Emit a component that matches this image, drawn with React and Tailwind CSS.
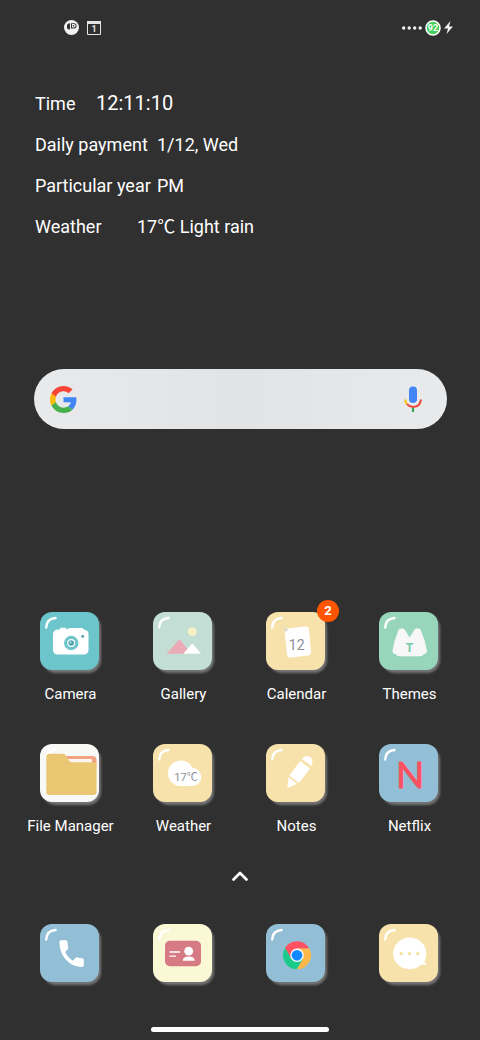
import { useState } from 'react';

// Every glyph is drawn on the same 59x58 tile
function CameraArt() {
  return (
    <>
      <rect x="20" y="15.7" width="6.3" height="4" rx="1" fill="#fff" />
      <path d="M18 17.6h8.500l3-1.700h12.500l3 2a4 4 0 0 1 3.500 4V38a4.500 4.500 0 0 1-4.500 4.500H17.500A4.500 4.500 0 0 1 13 38V22a4.500 4.500 0 0 1 5-4.400z" fill="#fff" />
      <circle cx="31.2" cy="31" r="7.200" fill="#6cc5ca" />
      <circle cx="31.2" cy="31" r="4" fill="#fff" />
      <circle cx="31.2" cy="31" r="2.800" fill="#4fa3aa" />
      <circle cx="30.5" cy="30.4" r="0.9" fill="#cdeef0" />
      <circle cx="42.7" cy="24.4" r="1.400" fill="#4b9da3" />
    </>
  );
}

function GalleryArt() {
  return (
    <>
      <circle cx="39.3" cy="19.7" r="4.4" fill="#f8f1c4" />
      <path d="M13.5 41.7L25.5 28.2q1-1 2 0L38 41.7z" fill="#eaabb6" />
      <path d="M30.3 41.7l8.5-9.6q.6-.6 1.2 0l8 9.6z" fill="#fff" />
    </>
  );
}

function CalendarArt() {
  return (
    <>
      <path d="M22 16.5l17-2a3.500 3.500 0 0 1 4 3l2 22a3.500 3.500 0 0 1-3 4l-17 2a3.500 3.500 0 0 1-4-3l-2.300-22z" fill="#fff" />
      <path d="M17 14.6l2 1.8 2.800.4-.6 2.600-2.400-.8z" fill="#d5d8dc" />
      <text x="30.7" y="38" textAnchor="middle" fontSize="14" fill="#8b8f98">12</text>
    </>
  );
}

function ThemesArt() {
  return (
    <>
      <path d="M19.3 18.5q.7-2 2.200-2h2.300q1.200 0 1.800 1l5 8 5-8q.6-1 1.800-1h2.300q1.500 0 2.200 2 4.600 10.500 6 20 .5 3-3 3.600-1 2.200-4 2.200H20.500q-3 0-4-2.200-3.500-.6-3-3.600 1.400-9.500 5.800-20z" fill="#f6f7f6" />
      <text x="30.500" y="39.700" textAnchor="middle" fontSize="12" fontWeight="700" fill="#76c8a8">T</text>
    </>
  );
}

function FilesArt() {
  return (
    <>
      <path d="M24 12h28.500a4 4 0 0 1 4 4v7H24z" fill="#f0a582" />
      <rect x="26" y="15" width="26" height="6" rx="1.5" fill="#fdf5f0" />
      <path d="M9 9.700h14q2 0 2.800 1.500l3 5q1 2 3.500 2H53.500a3 3 0 0 1 3 3V48a3 3 0 0 1-3 3H9.300a3 3 0 0 1-3-3V12.700a3 3 0 0 1 2.700-3z" fill="#eac873" />
    </>
  );
}

function WeatherArt() {
  return (
    <>
      <path d="M28 16.500c5.500 0 9.500 3 11.500 7.500 5 0 8.700 3.800 8.700 9 0 5-3.700 9-9 9H27.500C20.500 42 15 36.500 15 29.300 15 22 20.800 16.500 28 16.500z" fill="#fff" />
      <text x="33" y="37" textAnchor="middle" fontSize="11" fill="#8b8f98">17℃</text>
    </>
  );
}

function NotesArt() {
  return (
    <g fill="#fff">
      <path d="M36 15.200C39 11 42.500 11.500 44.500 13.200S47 18.500 45.500 22z" />
      <path d="M34.300 17l9.700 7.400L33 38.900l-9.700-7.400z" />
      <path d="M22.500 33.200l8.600 6.600-9 4.200q-.8.200-.7-.7z" />
    </g>
  );
}

function NetflixArt() {
  return <text x="31" y="44" textAnchor="middle" fontSize="37" fontFamily="Lato, sans-serif" fill="#fb5161" stroke="#fb5161">N</text>;
}

function PhoneArt() {
  return (
    <path
      transform="translate(16 12.5) scale(1.3 1.43)"
      d="M6.620 10.790c1.440 2.830 3.760 5.140 6.590 6.590l2.200-2.200c.27-.27.67-.36 1.020-.24 1.120.37 2.330.57 3.570.57.55 0 1 .45 1 1V20c0 .55-.45 1-1 1-9.390 0-17-7.610-17-17 0-.55.45-1 1-1h3.500c.55 0 1 .45 1 1 0 1.250.2 2.450.57 3.570.11.35.03.74-.25 1.020l-2.200 2.200z"
      fill="#fff"
      stroke="#fff"
      strokeWidth="0.7"
    />
  );
}

function ContactsArt() {
  return (
    <>
      <rect x="12" y="16.7" width="36" height="25.6" rx="5" fill="#d67a84" />
      <path d="M17 28h9.700M17 32.200h5.500" stroke="#fff" strokeWidth="1.300" strokeLinecap="round" />
      <circle cx="35.7" cy="27.2" r="4.400" fill="#fff" />
      <path d="M29.700 36.800c.3-3 2.300-4.300 6-4.300s5.700 1.300 6 4.300z" fill="#fff" />
    </>
  );
}

function ChromeArt() {
  return (
    <g transform="translate(31 31.3)">
      <path d="M-11.950-7.300A14 14 0 0 1 12.300-6.700H0L-5.800 3.350z" fill="#ff5160" />
      <path d="M12.300-6.700A14 14 0 0 1-.35 14L5.800 3.350 0-6.700z" fill="#ffb849" />
      <path d="M-.35 14A14 14 0 0 1-11.950-7.300L-5.800 3.350H5.800z" fill="#1bcb8a" />
      <circle r="6.700" fill="#fff" />
      <circle r="5.400" fill="#1189ff" />
    </g>
  );
}

function MessagesArt() {
  return (
    <>
      <ellipse cx="30.7" cy="29.4" rx="16.6" ry="15.8" fill="#fff" />
      <path d="M45 35q.2 3.500 2.600 5.600-4 .8-7.600-1z" fill="#fff" />
      <g fill="#f8dfa0">
        <circle cx="22.3" cy="29.6" r="1.7" />
        <circle cx="30.5" cy="29.6" r="1.7" />
        <circle cx="38.7" cy="29.6" r="1.7" />
      </g>
    </>
  );
}

const APPS = [
  { name: 'Camera', color: '#6cc5ca', Art: CameraArt },
  { name: 'Gallery', color: '#c3dfd5', Art: GalleryArt },
  { name: 'Calendar', color: '#f8e2ab', Art: CalendarArt, badge: 2 },
  { name: 'Themes', color: '#98d6bb', Art: ThemesArt },
  { name: 'File Manager', color: '#f8f8f7', Art: FilesArt },
  { name: 'Weather', color: '#f8e2ab', Art: WeatherArt },
  { name: 'Notes', color: '#f8e2ab', Art: NotesArt },
  { name: 'Netflix', color: '#93bfd6', Art: NetflixArt },
];

const DOCK = [
  { name: 'Phone', color: '#93bfd6', Art: PhoneArt },
  { name: 'Contacts', color: '#fbf8d6', Art: ContactsArt },
  { name: 'Chrome', color: '#93bfd6', Art: ChromeArt },
  { name: 'Messages', color: '#f8e2ab', Art: MessagesArt },
];

const INFO = [
  { label: 'Time', value: '12:11:10', labelClass: 'w-[61px]', valueClass: 'text-[20px]' },
  { label: 'Daily payment', value: '1/12, Wed', labelClass: 'w-[122px]', valueClass: 'text-[18px]' },
  { label: 'Particular year', value: 'PM', labelClass: 'w-[122px]', valueClass: 'text-[18px]' },
  { label: 'Weather', value: '17℃ Light rain', labelClass: 'w-[102px]', valueClass: 'text-[18px]' },
];

function Tile({ color, Art, badge }) {
  return (
    <span className="relative block">
      <svg className="block h-[61px] w-[61px] overflow-visible" viewBox="0 0 61 61" aria-hidden="true">
        <rect x="3" y="3" width="58" height="58" rx="13" fill="#747474" className="blur-[1px]" />
        <rect width="59" height="58" rx="12" fill={color} />
        <path d="M6.2 15.5C6.500 10 10 6.400 15.500 6" fill="none" stroke="#fff" strokeWidth="2.4" strokeLinecap="round" />
        <Art />
      </svg>
      {badge && (
        <span className="absolute -top-3 -right-3 flex h-[22px] w-[22px] items-center justify-center rounded-full bg-[#ff5500] text-[13px] font-bold">
          {badge}
        </span>
      )}
    </span>
  );
}

function StatusBar() {
  return (
    <header className="flex h-[55px] items-center justify-between pr-[27px] pl-16">
      <div className="flex items-center gap-2">
        <svg className="h-[15px] w-[15px]" viewBox="0 0 15 15" aria-hidden="true">
          <circle cx="7.5" cy="7.5" r="7.5" fill="#f2f2f2" />
          <path d="M3 5Q3.500 3.200 6 3.200V9.500Q3.500 9.500 3 8z" fill="#303030" />
          <path d="M7 3.200h3a2.600 2.600 0 0 1 0 5.200H7z" fill="#303030" />
          <path d="M8 4h2a1.700 1.700 0 0 1 0 3.400H8z" fill="#f2f2f2" />
          <circle cx="9.500" cy="5.700" r="0.8" fill="#303030" />
        </svg>
        <svg className="h-[14px] w-[14px]" viewBox="0 0 14 14" aria-hidden="true">
          <path d="M.5.5h13v13H.5z" fill="none" stroke="#e4e4e4" />
          <path d="M0 0h14v3H0z" fill="#e4e4e4" />
          <text x="7" y="11" textAnchor="middle" fontSize="9" fontWeight="700" fill="#e4e4e4">1</text>
        </svg>
      </div>
      <div className="flex items-center gap-[3px]">
        <svg className="h-[4px] w-[20px]" viewBox="0 0 20 4" fill="#f2f2f2" aria-hidden="true">
          <circle cx="1.7" cy="2" r="1.7" />
          <circle cx="7.2" cy="2" r="1.7" />
          <circle cx="12.7" cy="2" r="1.7" />
          <circle cx="18.2" cy="2" r="1.7" />
        </svg>
        <svg className="h-[16px] w-[16px]" viewBox="0 0 16 16" aria-hidden="true">
          <circle cx="8" cy="8" r="7" fill="#43cf5c" stroke="#fff" strokeWidth="1.6" />
          <text x="8" y="11" textAnchor="middle" fontSize="9" fontWeight="700" fill="#fff">92</text>
        </svg>
        <svg className="h-[13px] w-[9px]" viewBox="0 0 9 13" aria-hidden="true">
          <path d="M6.500 0L0 7.500h4L2.500 13 9 5.500H5z" fill="#f2f2f2" />
        </svg>
      </div>
    </header>
  );
}

function SearchBar() {
  const [query, setQuery] = useState('');
  return (
    <form
      role="search"
      onSubmit={e => e.preventDefault()}
      className="mr-[33px] ml-[34px] flex h-[60px] items-center rounded-full bg-linear-to-r from-[#e8eaec] via-[#e1e3e5] to-[#e8eaec] pr-[25px] pl-4"
    >
      <svg className="h-[27px] w-[27px] shrink-0" viewBox="0 0 48 48" aria-hidden="true">
        <path fill="#fb4438" d="M24 9.500c3.540 0 6.710 1.220 9.210 3.600l6.850-6.850C35.900 2.380 30.470 0 24 0 14.620 0 6.510 5.380 2.560 13.220l7.980 6.190C12.430 13.720 17.740 9.500 24 9.500z" />
        <path fill="#4285f4" d="M46.980 24.550c0-1.570-.15-3.090-.38-4.550H24v9.020h12.940c-.58 2.960-2.260 5.480-4.780 7.180l7.730 6c4.510-4.180 7.090-10.360 7.090-17.650z" />
        <path fill="#fbbc05" d="M10.530 28.590c-.48-1.450-.76-2.990-.76-4.590s.27-3.140.76-4.590l-7.980-6.190C.92 16.460 0 20.120 0 24s.92 7.540 2.560 10.780l7.970-6.190z" />
        <path fill="#46b04d" d="M24 48c6.480 0 11.930-2.130 15.890-5.810l-7.730-6c-2.150 1.450-4.920 2.300-8.160 2.300-6.260 0-11.570-4.220-13.470-9.910l-7.980 6.190C6.510 42.620 14.620 48 24 48z" />
      </svg>
      <input
        type="text"
        aria-label="Search"
        value={query}
        onChange={e => setQuery(e.target.value)}
        className="mx-3 min-w-0 flex-1 bg-transparent text-[18px] text-[#303030] outline-none"
      />
      <button type="button" aria-label="Voice search">
        <svg className="block h-[26px] w-[18px]" viewBox="0 0 18 26" fill="none" aria-hidden="true">
          <rect x="5" y="0.5" width="8" height="16.5" rx="4" fill="#4285f4" />
          <path d="M1.200 13.500Q1.300 16.300 3 18.300" stroke="#fbbc05" strokeWidth="2" />
          <path d="M3 18.200Q5.300 20.800 9 20.900 16.500 20.500 16.900 13.500" stroke="#f04337" strokeWidth="2" />
          <path d="M9 21.800V26" stroke="#34a853" strokeWidth="2.200" />
        </svg>
      </button>
    </form>
  );
}

export default function App() {
  return (
    <div className="flex min-h-screen flex-col bg-[#303030] font-[Roboto,'Noto_Sans_CJK_SC',sans-serif] text-white">
      <StatusBar />

      <main className="flex flex-1 flex-col">
        <dl className="mt-7 px-[35px] leading-[41px]">
          {INFO.map(({ label, value, labelClass, valueClass }) => (
            <div key={label} className="flex h-[41px] whitespace-nowrap">
              <dt className={`text-[18px] ${labelClass}`}>{label}</dt>
              <dd className={valueClass}>{value}</dd>
            </div>
          ))}
        </dl>

        <div className="mt-[122px]">
          <SearchBar />
        </div>

        <div className="mt-[183px] grid grid-cols-4 gap-y-[40px] px-[14px]">
          {APPS.map(({ name, ...tile }) => (
            <button key={name} type="button" className="flex flex-col items-center gap-[11px]">
              <Tile {...tile} />
              <span className="text-[15px] leading-5 whitespace-nowrap">{name}</span>
            </button>
          ))}
        </div>

        <button type="button" aria-label="All apps" className="mt-[34px] self-center">
          <svg className="block h-[12px] w-[18px]" viewBox="0 0 18 12" aria-hidden="true">
            <path d="M2.5 9.5L9 3l6.500 6.500" fill="none" stroke="#fff" strokeWidth="2.8" strokeLinecap="round" strokeLinejoin="round" />
          </svg>
        </button>
      </main>

      <nav aria-label="Dock" className="mt-[42px] grid grid-cols-4 px-[14px]">
        {DOCK.map(({ name, ...tile }) => (
          <button key={name} type="button" aria-label={name} className="flex justify-center">
            <Tile {...tile} />
          </button>
        ))}
      </nav>

      <div className="mt-[42px] mb-2 h-[5px] w-[37%] self-center rounded-full bg-white" />
    </div>
  );
}
